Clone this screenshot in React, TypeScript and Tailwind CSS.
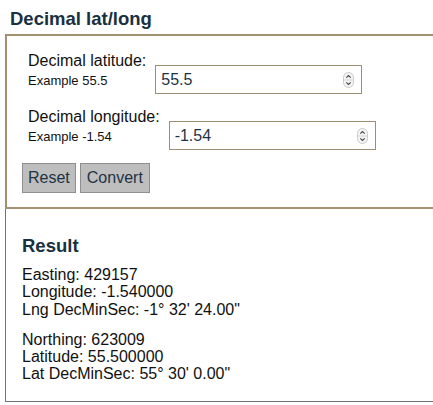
import React from "react";

function Spinner() {
  return (
    <svg width="11" height="16" viewBox="0 0 11 16" className="shrink-0">
      <rect x="0.5" y="0.5" width="10" height="15" rx="5" fill="#f4f4f4" stroke="#c9c9c9" />
      <line x1="1.5" y1="8" x2="9.5" y2="8" stroke="#d4d4d4" />
      <path d="M3.3 5.6 L5.5 3.6 L7.7 5.6" fill="none" stroke="#444" strokeWidth="1.1" />
      <path d="M3.3 10.4 L5.5 12.4 L7.7 10.4" fill="none" stroke="#444" strokeWidth="1.1" />
    </svg>
  );
}

interface FieldProps {
  label: string;
  example: string;
  value: string;
}

function Field({ label, example, value }: FieldProps) {
  return (
    <div className="flex items-start pl-[6px]">
      <div className="flex flex-col text-[#111]">
        <span className="text-[16px] leading-[18px]">{label}</span>
        <span className="mt-[3px] text-[13px] leading-[15px]">{example}</span>
      </div>
      <div className="ml-[9px] mt-[13px] flex h-[29px] w-[207px] items-center border border-[#9c8f74] bg-white pl-[5px] pr-[7px]">
        <input
          type="text"
          defaultValue={value}
          className="min-w-0 flex-1 bg-transparent text-[16px] text-[#1d3345] outline-none"
        />
        <Spinner />
      </div>
    </div>
  );
}

const lng = ["Easting: 429157", "Longitude: -1.540000", "Lng DecMinSec: -1° 32' 24.00\""];
const lat = ["Northing: 623009", "Latitude: 55.500000", "Lat DecMinSec: 55° 30' 0.00\""];

export default function App() {
  return (
    <div className="h-[405px] w-[433px] overflow-hidden bg-white font-['Liberation_Sans',Arial,sans-serif]">
      <h2 className="pl-[10px] pt-[8px] text-[18.5px] font-bold leading-[21px] text-[#19303f]">
        Decimal lat/long
      </h2>

      {/* Input panel */}
      <div className="ml-[5px] mt-[5px] w-[440px] border-2 border-r-0 border-[#a3916f] px-[15px] pt-[16px] pb-[14px]">
        <div className="flex flex-col gap-[14px]">
          <Field label="Decimal latitude:" example="Example 55.5" value="55.5" />
          <Field label="Decimal longitude:" example="Example -1.54" value="-1.54" />
        </div>
        <div className="mt-[13px] flex gap-[4px]">
          <button className="h-[30px] border border-[#8f8f8f] bg-[#bebebe] px-[5px] text-[16px] text-[#1d3345]">
            Reset
          </button>
          <button className="h-[30px] border border-[#8f8f8f] bg-[#bebebe] px-[6px] text-[16px] text-[#1d3345]">
            Convert
          </button>
        </div>
      </div>

      {/* Result panel */}
      <div className="ml-[5px] h-[193px] w-[440px] border-b border-l border-[#6b7580] pl-[16px] pt-[26px]">
        <h3 className="text-[18.5px] font-bold leading-[21px] text-[#19303f]">Result</h3>
        <div className="mt-[10px] text-[16px] leading-[17.3px] text-[#111]">
          {lng.map((t) => (
            <div key={t}>{t}</div>
          ))}
        </div>
        <div className="mt-[13px] text-[16px] leading-[17.3px] text-[#111]">
          {lat.map((t) => (
            <div key={t}>{t}</div>
          ))}
        </div>
      </div>
    </div>
  );
}
